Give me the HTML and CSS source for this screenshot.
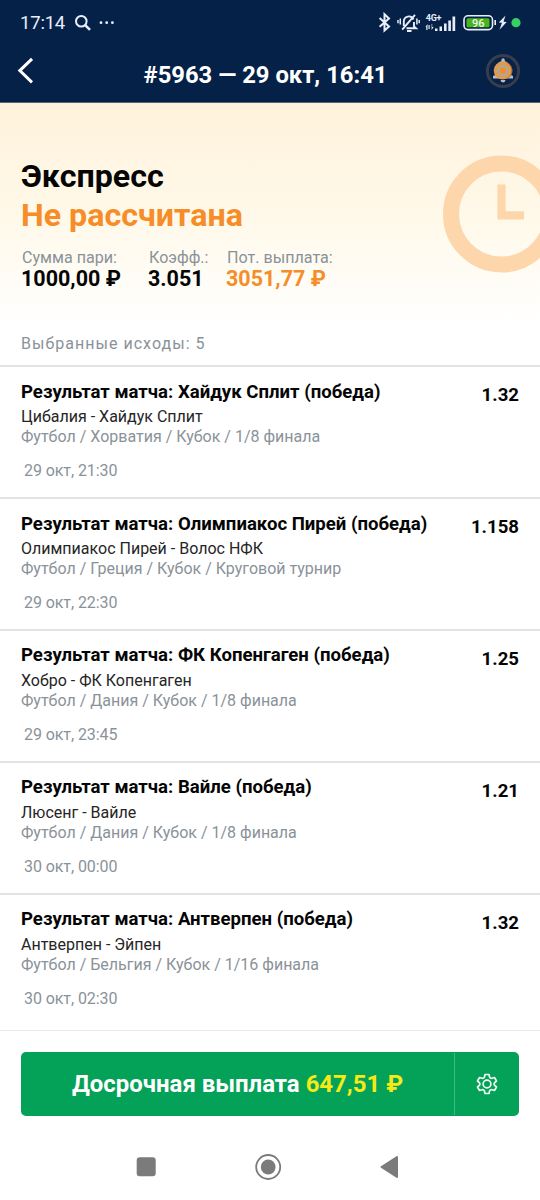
FILE: index.html
```html
<!DOCTYPE html>
<html lang="ru">
<head>
<meta charset="utf-8">
<title>#5963</title>
<link rel="stylesheet" href="styles.css">
</head>
<body>
<div class="screen">
  <header class="top">
    <div class="status">
      <span class="clock">17:14</span>
      <svg class="status-left" width="46" height="24" viewBox="0 0 46 24" fill="none" stroke="#e9effa">
        <circle cx="7.3" cy="9.2" r="5.3" stroke-width="2"/><path d="M11.2 13.1 16 17.9" stroke-width="2.6"/>
        <g fill="#e9effa" stroke="none"><circle cx="27" cy="10.7" r="1.4"/><circle cx="32.7" cy="10.7" r="1.4"/><circle cx="38.4" cy="10.7" r="1.4"/></g>
      </svg>
      <svg class="status-right" width="146" height="24" viewBox="0 0 146 24" fill="none" stroke="#e9effa">
        <path d="M1.600 6 11 14.400 6.500 18.400V2.200L11 6.400 1.600 14.800" stroke-width="2"/>
        <path d="M25.800 14V9.500c0-5.500 7.500-7 9.700-2M36 10v4.500l2 1.800H28.500M24.200 17.600 37 2.800" stroke-width="1.900"/>
        <path d="M29 19h4.500" stroke-width="2"/>
        <path d="M22.300 6.500v6M20 8v3.200M38.900 6.500v6M41.200 8v3.200" stroke-width="1.500"/>
        <text class="net" x="47.800" y="8.600">4G+</text>
        <g fill="#e9effa" stroke="none"><path d="M47.500 15l2-3v6h-1.200v-3zM53.600 12v6l2-3h-1.400v-3z"/><path d="M50.500 13h1.200v4h-1.200zM57 16.500h2.500v2.500H57zM61.500 14.500H64V19h-2.500zM66 11.500h2.600V19H66zM70.300 8.500h2.600V19h-2.600zM74.500 4.500h2.700V19h-2.700z"/></g>
        <rect x="86" y="3.800" width="28.500" height="13.800" rx="4" stroke-width="1.600"/>
        <rect x="88.500" y="6.200" width="23" height="9" rx="1.500" fill="#48b51c" stroke="none"/>
        <path d="M117.200 8v5" stroke-width="1.600"/>
        <text class="charge" x="100.300" y="14.700">96</text>
        <path d="M127.500 3.500 120.800 10.500l3.200.3-2.500 7 7.200-7.800-3.200-.3z" fill="#e9effa" stroke="none"/>
        <circle cx="138" cy="10.700" r="4.600" fill="#38cf65" stroke="none"/>
      </svg>
    </div>
    <div class="navbar">
      <svg class="back" width="20" height="28" viewBox="0 0 20 28" fill="none" stroke="#fff" stroke-width="3"><path d="M17 1.800 4.800 13.600l12.200 11.800"/></svg>
      <h1 class="title">#5963 — 29 окт, 16:41</h1>
      <svg class="bell" width="36" height="36" viewBox="0 0 36 36">
        <circle cx="18" cy="18" r="15.600" fill="#0a2149" stroke="#363e4b" stroke-width="3"/>
        <path d="M8 25.500h20v-2.500l-3-1.500v-6c0-4-2.200-6.500-5.200-7.200V7a1.700 1.700 0 0 0-3.400 0v1.300c-3 .7-5 3.200-5 7.200v6l-3.400 1.500z" fill="#b8bcc2"/>
        <path d="M15.500 27h5a2.500 2.500 0 0 1-5 0" fill="#b8bcc2"/>
        <circle cx="19" cy="17.500" r="8.600" fill="#9c6933"/>
        <circle cx="17.600" cy="17.500" r="8.900" fill="#e09a4c"/>
        <circle cx="17.800" cy="17.600" r="4.400" fill="#ee8e2c" stroke="#b5a595" stroke-width="2.400"/>
      </svg>
    </div>
  </header>

  <section class="hero">
    <svg class="watermark" width="98" height="120" viewBox="0 0 98 120" fill="none" stroke="#fdd6ac">
      <circle cx="59.500" cy="60" r="50.500" stroke-width="16"/><path d="M59.500 30.500V61.300H82" stroke-width="8.200"/>
    </svg>
    <h2 class="kind">Экспресс</h2>
    <p class="state">Не рассчитана</p>
    <dl class="sums">
      <div class="sum sum-stake"><dt>Сумма пари:</dt><dd>1000,00 ₽</dd></div>
      <div class="sum sum-odds"><dt>Коэфф.:</dt><dd>3.051</dd></div>
      <div class="sum sum-win"><dt>Пот. выплата:</dt><dd>3051,77 ₽</dd></div>
    </dl>
    <p class="count">Выбранные исходы: 5</p>
  </section>

  <main class="list">
    <article class="bet"><div class="info"><h3>Результат матча: Хайдук Сплит (победа)</h3><p class="teams">Цибалия - Хайдук Сплит</p><p class="league">Футбол / Хорватия / Кубок / 1/8 финала</p><p class="date">29 окт, 21:30</p></div><span class="odd">1.32</span></article>
    <article class="bet"><div class="info"><h3>Результат матча: Олимпиакос Пирей (победа)</h3><p class="teams">Олимпиакос Пирей - Волос НФК</p><p class="league">Футбол / Греция / Кубок / Круговой турнир</p><p class="date">29 окт, 22:30</p></div><span class="odd">1.158</span></article>
    <article class="bet"><div class="info"><h3>Результат матча: ФК Копенгаген (победа)</h3><p class="teams">Хобро - ФК Копенгаген</p><p class="league">Футбол / Дания / Кубок / 1/8 финала</p><p class="date">29 окт, 23:45</p></div><span class="odd">1.25</span></article>
    <article class="bet"><div class="info"><h3>Результат матча: Вайле (победа)</h3><p class="teams">Люсенг - Вайле</p><p class="league">Футбол / Дания / Кубок / 1/8 финала</p><p class="date">30 окт, 00:00</p></div><span class="odd">1.21</span></article>
    <article class="bet"><div class="info"><h3>Результат матча: Антверпен (победа)</h3><p class="teams">Антверпен - Эйпен</p><p class="league">Футбол / Бельгия / Кубок / 1/16 финала</p><p class="date">30 окт, 02:30</p></div><span class="odd">1.32</span></article>
  </main>

  <footer class="bottom">
    <div class="cashout">
      <button class="pay">Досрочная выплата <span class="amount">647,51 ₽</span></button>
      <button class="settings" aria-label="Настройки">
        <svg width="24" height="24" viewBox="0 0 24 24" fill="none" stroke="#eefaf2" stroke-width="1.700" stroke-linejoin="round"><path d="M10 2.500h4l.5 2.300c.2 1 1.500 1.800 2.500 1.500l2.500-.8 2 3.500-1.800 1.600c-.8.700-.8 2.100 0 2.800l1.800 1.600-2 3.500-2.500-.8c-1-.3-2.300.5-2.500 1.500l-.5 2.300h-4l-.5-2.300c-.2-1-1.500-1.800-2.500-1.500l-2.500.8-2-3.500 1.800-1.600c.8-.7.8-2.100 0-2.800L2.500 9l2-3.500 2.500.8c1 .3 2.300-.5 2.500-1.500z"/><circle cx="12" cy="12" r="3.900"/></svg>
      </button>
    </div>
    <svg class="system-nav" width="540" height="30" viewBox="0 0 540 30" fill="#7b7b7b">
      <rect x="136.700" y="5.300" width="19" height="19" rx="3"/>
      <circle cx="268.200" cy="15" r="12" fill="none" stroke="#7b7b7b" stroke-width="1.800"/><circle cx="268.200" cy="15" r="7.400"/>
      <path d="M381.500 15 397 5v20z" stroke="#7b7b7b" stroke-width="2" stroke-linejoin="round"/>
    </svg>
  </footer>
</div>
</body>
</html>
```

FILE: styles.css
```css
* { box-sizing: border-box; margin: 0; padding: 0; }
body { font-family: Roboto, sans-serif; background: #fff; color: #050505; }
.screen { width: 540px; height: 1200px; display: flex; flex-direction: column; overflow: hidden; background: #fff; white-space: nowrap; }
svg { display: block; flex: none; }

.top { height: 103px; background: #052147; border-bottom: 1px solid #596575; color: #fff; }
.status { display: flex; height: 46px; padding: 12px 16px 0 20px; }
.clock { width: 54px; font-size: 18.500px; line-height: 23px; color: #e9effa; letter-spacing: -.2px; }
.status-right { margin-left: auto; }
.net { font: 700 9px Roboto, sans-serif; fill: #e9effa; stroke: none; letter-spacing: -.3px; }
.charge { font: 500 11px Roboto, sans-serif; fill: #eef8ea; stroke: none; text-anchor: middle; }
.navbar { display: flex; align-items: flex-start; justify-content: space-between; padding: 7px 19px 0 15px; }
.back { margin-top: 4px; }
.title { font-size: 23.800px; line-height: 30px; font-weight: 700; margin-top: 7px; margin-left: 11px; }

.hero { position: relative; height: 262px; padding: 54px 21px 0; background: linear-gradient(#fff2db, #fff9ea 45%, #fff 85%); }
.watermark { position: absolute; right: 0; top: 51px; }
.kind, .state { font-size: 32.200px; line-height: 39px; font-weight: 700; }
.state { color: #f68d28; }
.sums { display: flex; margin-top: 12px; }
.sum-stake { width: 127px; }
.sum-odds { width: 78px; }
.sum dt { font-size: 16.100px; line-height: 22px; color: #8a9299; padding-left: 1px; }
.sum dd { font-size: 21.500px; line-height: 19px; font-weight: 700; }
.sum-win dd { color: #f68d28; }
.count { margin-top: 45px; font-size: 16px; line-height: 22px; letter-spacing: 1.030px; color: #8a9299; }

.list { height: 665px; }
.bet { display: flex; justify-content: space-between; height: 131.900px; padding: 12.700px 21px 0; border-top: 2px solid #e0e3e4; }
.bet h3 { font-size: 18.580px; line-height: 24px; font-weight: 700; }
.teams, .league, .date { font-size: 16px; line-height: 20px; }
.teams { margin-top: 3.300px; color: #252525; }
.league, .date { color: #8a9299; }
.date { margin-top: 14.500px; padding-left: 3px; letter-spacing: -.08px; }
.odd { font-size: 18.600px; line-height: 24px; font-weight: 700; margin-top: 3.300px; }

.bottom { height: 170px; border-top: 1px solid #e8e9ea; }
.cashout { display: flex; height: 64px; margin: 21px 21px 0; background: #04a158; border-radius: 5px; }
.cashout button { border: 0; background: none; color: #fff; }
.pay { flex: 1; font: 700 23.950px Roboto, sans-serif; }
.pay .amount { color: #f5ea18; }
.settings { width: 65px; display: flex; align-items: center; justify-content: center; margin: 1px 0; }
.cashout .settings { border-left: 1px solid #43b97f; }
.system-nav { margin-top: 36px; }
```
